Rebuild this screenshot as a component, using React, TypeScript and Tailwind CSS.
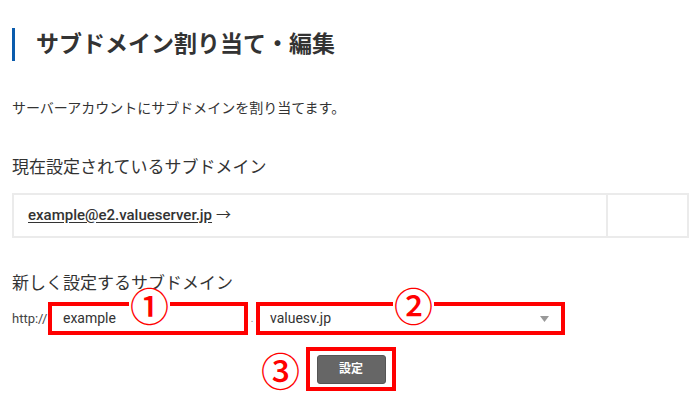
const jp = "font-['Roboto','Noto_Sans_CJK_JP',sans-serif]";

function Badge({ n, className }: { n: string; className: string }) {
  return (
    <span
      className={`absolute flex h-[30px] items-center bg-white px-[1px] text-[39px] leading-none font-medium text-[#f00] font-['Noto_Sans_CJK_JP',sans-serif] ${className}`}
    >
      {n}
    </span>
  );
}

export default function App() {
  return (
    <div className={`flow-root w-[700px] h-[412px] overflow-hidden bg-white px-3 text-[#333] ${jp}`}>
      <h1 className="mt-[28px] border-l-[3px] border-[#0b5cad] pl-[21px] text-[23px] leading-[33px] font-bold text-[#333]">
        サブドメイン割り当て・編集
      </h1>
      <p className="mt-[37px] text-[14px] leading-[20px]">サーバーアカウントにサブドメインを割り当てます。</p>

      <h2 className="mt-[37px] text-[17px] leading-[24px]">現在設定されているサブドメイン</h2>
      <div className="mt-[14px] flex h-[45px] w-[677px] border-2 border-[#ebebeb]">
        <div className="flex flex-1 items-center border-r-2 border-[#ebebeb] pl-[14px] text-[15px]">
          <a className="underline underline-offset-2 font-medium">example@e2.valueserver.jp</a>
          <span className="ml-1">→</span>
        </div>
        <div className="w-[79px]" />
      </div>

      <h2 className="mt-[33px] text-[17px] leading-[24px]">新しく設定するサブドメイン</h2>
      <div className="mt-[7px] flex h-[33px] items-center">
        <span className="w-[36px] text-[13px] text-[#444]">http://</span>
        <div className="relative flex h-[33px] w-[200px] items-center border-[4px] border-[#f00] pl-[11px] text-[14px]">
          example
          <Badge n="①" className="left-[77px] -top-[17px]" />
        </div>
        <span className="w-[8px] text-center text-[10px] text-[#888]">.</span>
        <div className="relative flex h-[33px] w-[309px] items-center justify-between border-[4px] border-[#f00] pl-[10px] pr-[12px] text-[14px]">
          valuesv.jp
          <svg width="9" height="6" viewBox="0 0 9 6">
            <path d="M0 0h9L4.5 6z" fill="#999" />
          </svg>
          <Badge n="②" className="left-[133px] -top-[17px]" />
        </div>
      </div>

      <div className="mt-[12px] flex justify-center pl-[2px]">
        <div className="relative flex h-[44px] w-[90px] items-center justify-center border-[4px] border-[#f00]">
          <span className="absolute right-full top-[3px] mr-[10px] flex h-[30px] items-center text-[39px] leading-none font-medium text-[#f00] font-['Noto_Sans_CJK_JP',sans-serif]">
            ③
          </span>
          <button className="h-[29px] w-[69px] rounded-[3px] border border-[#555] bg-[#666] text-[12px] font-bold text-white">
            設定
          </button>
        </div>
      </div>
    </div>
  );
}
